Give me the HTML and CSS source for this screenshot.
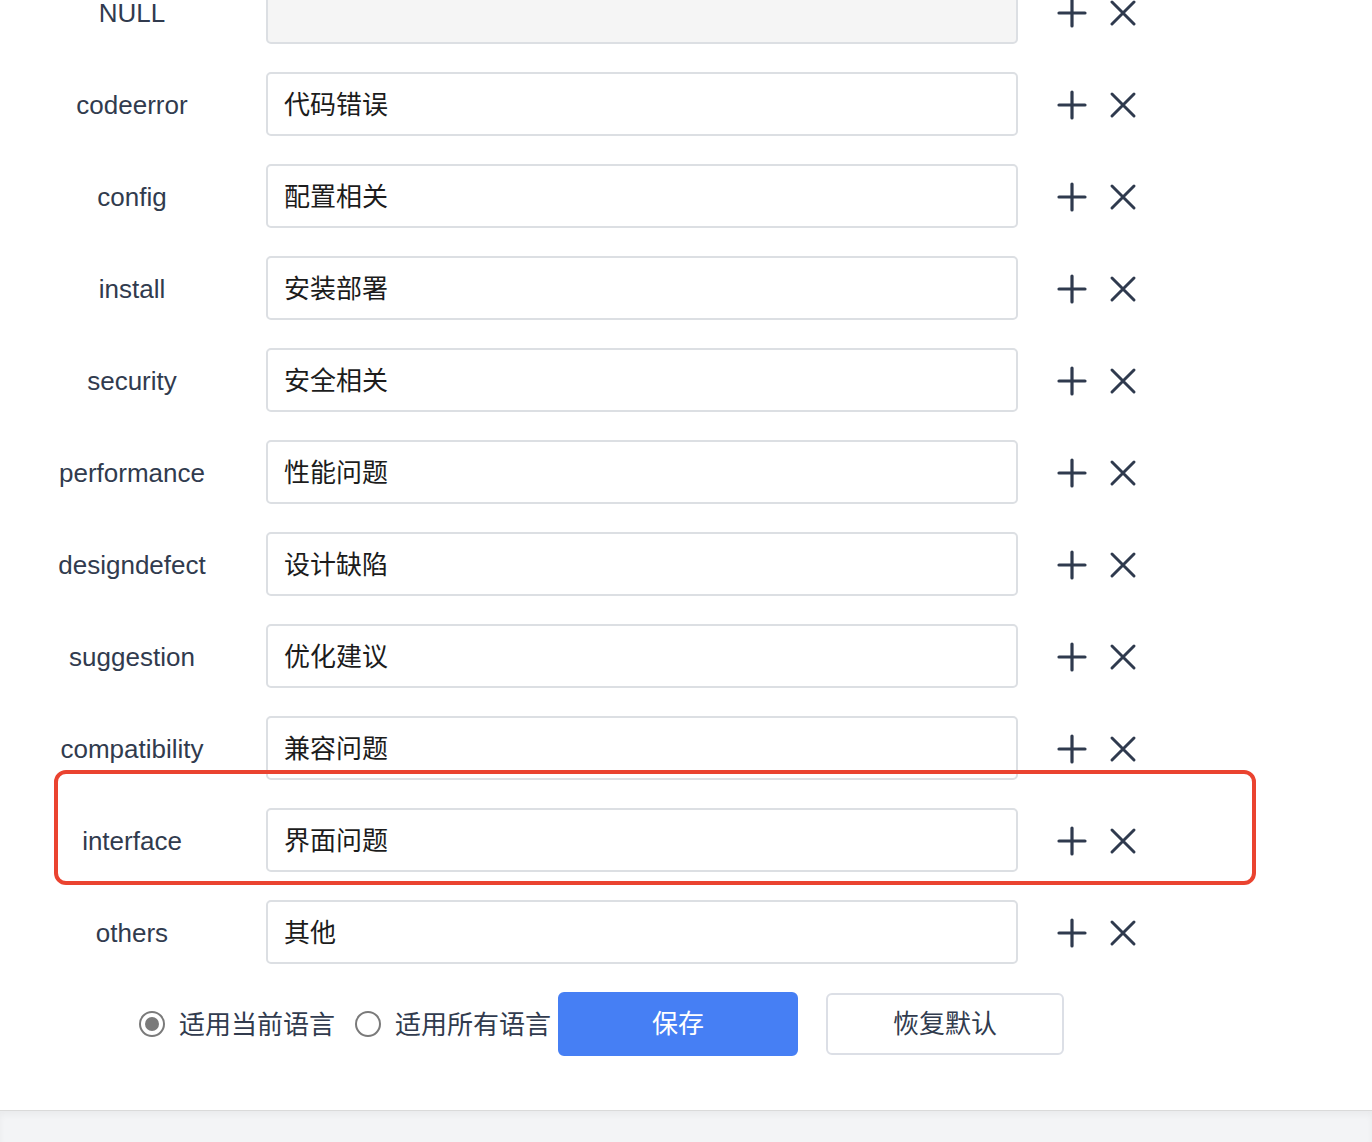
FILE: index.html
```html
<!DOCTYPE html>
<html lang="zh-CN">
<head>
  <meta charset="UTF-8" />
  <meta name="viewport" content="width=device-width, initial-scale=1.0"/>
  <title>Bug 类型</title>
  <link rel="stylesheet" href="styles.css">
</head>
<body>
  <div class="page">
    <form class="lang-form">
      <div class="row">
        <label class="key">NULL</label>
        <input class="value" type="text" value="" disabled>
        <span class="actions">
          <svg class="icon plus" viewBox="0 0 32 32"><path d="M16 3v26M3 16h26"/></svg>
          <svg class="icon close" viewBox="0 0 32 32"><path d="M5 5l22 22M27 5L5 27"/></svg>
        </span>
      </div>
      <div class="row">
        <label class="key">codeerror</label>
        <input class="value" type="text" value="代码错误">
        <span class="actions">
          <svg class="icon plus" viewBox="0 0 32 32"><path d="M16 3v26M3 16h26"/></svg>
          <svg class="icon close" viewBox="0 0 32 32"><path d="M5 5l22 22M27 5L5 27"/></svg>
        </span>
      </div>
      <div class="row">
        <label class="key">config</label>
        <input class="value" type="text" value="配置相关">
        <span class="actions">
          <svg class="icon plus" viewBox="0 0 32 32"><path d="M16 3v26M3 16h26"/></svg>
          <svg class="icon close" viewBox="0 0 32 32"><path d="M5 5l22 22M27 5L5 27"/></svg>
        </span>
      </div>
      <div class="row">
        <label class="key">install</label>
        <input class="value" type="text" value="安装部署">
        <span class="actions">
          <svg class="icon plus" viewBox="0 0 32 32"><path d="M16 3v26M3 16h26"/></svg>
          <svg class="icon close" viewBox="0 0 32 32"><path d="M5 5l22 22M27 5L5 27"/></svg>
        </span>
      </div>
      <div class="row">
        <label class="key">security</label>
        <input class="value" type="text" value="安全相关">
        <span class="actions">
          <svg class="icon plus" viewBox="0 0 32 32"><path d="M16 3v26M3 16h26"/></svg>
          <svg class="icon close" viewBox="0 0 32 32"><path d="M5 5l22 22M27 5L5 27"/></svg>
        </span>
      </div>
      <div class="row">
        <label class="key">performance</label>
        <input class="value" type="text" value="性能问题">
        <span class="actions">
          <svg class="icon plus" viewBox="0 0 32 32"><path d="M16 3v26M3 16h26"/></svg>
          <svg class="icon close" viewBox="0 0 32 32"><path d="M5 5l22 22M27 5L5 27"/></svg>
        </span>
      </div>
      <div class="row">
        <label class="key">designdefect</label>
        <input class="value" type="text" value="设计缺陷">
        <span class="actions">
          <svg class="icon plus" viewBox="0 0 32 32"><path d="M16 3v26M3 16h26"/></svg>
          <svg class="icon close" viewBox="0 0 32 32"><path d="M5 5l22 22M27 5L5 27"/></svg>
        </span>
      </div>
      <div class="row">
        <label class="key">suggestion</label>
        <input class="value" type="text" value="优化建议">
        <span class="actions">
          <svg class="icon plus" viewBox="0 0 32 32"><path d="M16 3v26M3 16h26"/></svg>
          <svg class="icon close" viewBox="0 0 32 32"><path d="M5 5l22 22M27 5L5 27"/></svg>
        </span>
      </div>
      <div class="row">
        <label class="key">compatibility</label>
        <input class="value" type="text" value="兼容问题">
        <span class="actions">
          <svg class="icon plus" viewBox="0 0 32 32"><path d="M16 3v26M3 16h26"/></svg>
          <svg class="icon close" viewBox="0 0 32 32"><path d="M5 5l22 22M27 5L5 27"/></svg>
        </span>
      </div>
      <div class="row marked">
        <label class="key">interface</label>
        <input class="value" type="text" value="界面问题">
        <span class="actions">
          <svg class="icon plus" viewBox="0 0 32 32"><path d="M16 3v26M3 16h26"/></svg>
          <svg class="icon close" viewBox="0 0 32 32"><path d="M5 5l22 22M27 5L5 27"/></svg>
        </span>
        <div class="highlight"></div>
      </div>
      <div class="row">
        <label class="key">others</label>
        <input class="value" type="text" value="其他">
        <span class="actions">
          <svg class="icon plus" viewBox="0 0 32 32"><path d="M16 3v26M3 16h26"/></svg>
          <svg class="icon close" viewBox="0 0 32 32"><path d="M5 5l22 22M27 5L5 27"/></svg>
        </span>
      </div>

      <div class="form-actions">
        <label class="radio checked"><span class="radio-dot"></span>适用当前语言</label>
        <label class="radio"><span class="radio-dot"></span>适用所有语言</label>
        <button type="button" class="btn btn-primary">保存</button>
        <button type="button" class="btn">恢复默认</button>
      </div>
    </form>
  </div>
  <div class="footer"></div>
</body>
</html>
```

FILE: styles.css
```css
html, body {
  margin: 0;
  padding: 0;
  background: #fff;
  font-family: 'Liberation Sans', 'Noto Sans CJK SC', sans-serif;
  color: #313b4e;
  overflow: hidden;
}

.page {
  height: 1110px;
  overflow: hidden;
}

.lang-form {
  margin-top: -20px;
}

.row {
  display: flex;
  align-items: center;
  height: 64px;
  margin-bottom: 28px;
  position: relative;
}

.key {
  width: 264px;
  flex: none;
  text-align: center;
  font-size: 26px;
  color: #313b4e;
  margin-right: 2px;
  padding-top: 2px;
}

.value {
  width: 752px;
  height: 64px;
  box-sizing: border-box;
  border: 2px solid #dcdfe3;
  border-radius: 5px;
  padding: 0 16px 3px;
  font-size: 26px;
  font-family: 'Noto Sans CJK SC', sans-serif;
  color: #1c1c1c;
  background: #fff;
  outline: none;
}

.value:disabled {
  background: #f5f5f5;
}

.actions {
  display: flex;
  align-items: center;
  gap: 19px;
  margin-left: 38px;
  margin-top: 2px;
}

.icon {
  width: 32px;
  height: 32px;
  fill: none;
  stroke: #2f3a4e;
  stroke-width: 3.2;
  stroke-linecap: round;
}

.icon.close {
  stroke-width: 3;
}

.highlight {
  position: absolute;
  left: 54px;
  top: -38px;
  width: 1202px;
  height: 115px;
  box-sizing: border-box;
  border: 4px solid #ea4330;
  border-radius: 12px;
  pointer-events: none;
}

.form-actions {
  display: flex;
  align-items: center;
  padding-left: 139px;
}

.radio {
  display: flex;
  align-items: center;
  font-family: 'Noto Sans CJK SC', sans-serif;
  font-size: 26px;
  color: #313b4e;
  margin-right: 20px;
  height: 64px;
  padding-bottom: 3px;
  box-sizing: border-box;
}

.radio:nth-child(2) {
  margin-right: 7px;
}

.radio-dot {
  width: 26px;
  height: 26px;
  box-sizing: border-box;
  border: 2px solid #7a7a7a;
  border-radius: 50%;
  margin-right: 14px;
  margin-top: 3px;
  position: relative;
}

.radio.checked .radio-dot::after {
  content: '';
  position: absolute;
  left: 4px;
  top: 4px;
  width: 14px;
  height: 14px;
  border-radius: 50%;
  background: #7a7a7a;
}

.btn {
  width: 238px;
  height: 62px;
  box-sizing: border-box;
  border: 2px solid #dcdfe6;
  border-radius: 6px;
  background: #fff;
  font-family: 'Noto Sans CJK SC', sans-serif;
  font-size: 26px;
  color: #313b4e;
  margin-right: 28px;
  padding: 0 0 5px;
  cursor: pointer;
}

.btn-primary {
  width: 240px;
  height: 64px;
  background: #467ff4;
  border-color: #467ff4;
  color: #fff;
}

.footer {
  height: 32px;
  background: #f3f4f6;
  border-top: 1px solid #dadada;
  box-shadow: inset 0 4px 6px rgba(0, 0, 0, 0.04);
}
```
